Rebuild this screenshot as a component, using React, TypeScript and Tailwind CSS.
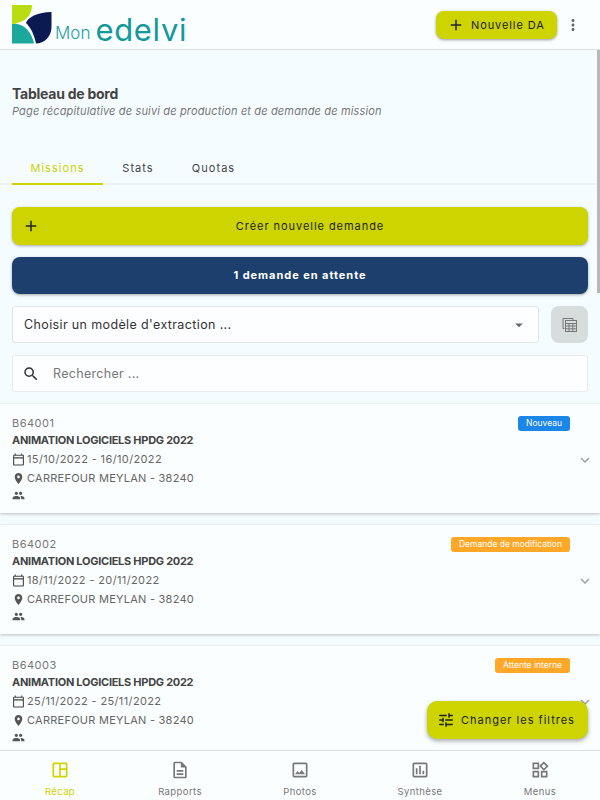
import React from "react";
import {
  MdAdd, MdMoreVert, MdOutlineCalendarToday, MdPlace, MdPeople, MdExpandMore, MdSearch, MdArrowDropDown,
  MdOutlineDescription, MdOutlinePhoto, MdOutlineAssessment, MdOutlineWidgets, MdTune, MdOutlineSpaceDashboard,
} from "react-icons/md";

function Logo() {
  return (
    <div className="flex items-end h-[49px] pl-3 pb-[6px]">
      <svg width="40" height="39" viewBox="0 0 40 39" className="mb-[-1px]">
        <path d="M0 0H20C20 9 15 15 8 17C5 18 3 19 0 20Z" fill="#b9dc12" />
        <path d="M0 19H5C13 20 20 28 22 38.500H0Z" fill="#1ba79c" />
        <path d="M39.500 7V22C39.500 32 32 38.500 24 38.500C22 28 18 22 14 18C16 12 26 7 39.500 7Z" fill="#0b1a52" />
      </svg>
      <span className="ml-[3px] text-[17px] leading-[20px] text-[#1c9e9c] font-light">Mon</span>
      <span className="ml-[5px] mb-[-2px] text-[31px] leading-[30px] text-[#12999a] tracking-[0.7px]">edelvi</span>
    </div>
  );
}

function Card({ code, dates, tag, tagColor }: { code: string; dates: string; tag: string; tagColor: string }) {
  return (
    <div className="relative h-[109px] bg-[#fbfeff] shadow-[0_1px_3px_rgba(0,0,0,0.25)] px-3 pt-[12px] shrink-0">
      <div className="text-[11px] leading-[14px] text-[#777] tracking-[0.5px]">{code}</div>
      <div className="mt-[3px] text-[11px] leading-[14px] font-bold text-[#444] tracking-[-0.27px]">ANIMATION LOGICIELS HPDG 2022</div>
      <div className="mt-[5px] flex items-center h-[14px] text-[11px] text-[#666] tracking-[0.37px]">
        <MdOutlineCalendarToday className="text-[13px] text-[#444] mr-[2px]" />{dates}
      </div>
      <div className="mt-[5px] flex items-center h-[14px] text-[11px] text-[#666] tracking-[0.25px]">
        <MdPlace className="text-[13px] text-[#555] mr-[2px]" />CARREFOUR MEYLAN - 38240
      </div>
      <div className="mt-[3px] h-[14px] flex items-center"><MdPeople className="text-[13px] text-[#555]" /></div>
      <span className={`absolute right-[30px] top-[12px] h-[15px] px-2 rounded-[3px] text-[8.5px] leading-[15px] text-white ${tagColor}`}>{tag}</span>
      <MdExpandMore className="absolute right-[6px] top-[47px] text-[18px] text-[#9aa0a3]" />
    </div>
  );
}

function NavItem({ icon, label, active }: { icon: React.ReactNode; label: string; active?: boolean }) {
  return (
    <div className={`flex-1 flex flex-col items-center pt-[9px] ${active ? "text-[#cdd400]" : "text-[#777]"}`}>
      <div className="text-[20px] h-[20px] flex items-center justify-center">{icon}</div>
      <span className="mt-[6px] text-[9.5px] leading-[12px] tracking-[0.4px]">{label}</span>
    </div>
  );
}

export default function App() {
  return (
    <div className="relative w-[600px] h-[800px] flex flex-col overflow-hidden bg-[#f5fcff] font-['Inter',sans-serif]">
      <header className="h-[50px] shrink-0 bg-[#fbfeff] border-b border-[#dcdfe0] flex items-start justify-between">
        <Logo />
        <div className="flex items-center pt-[11px] pr-[18px]">
          <button className="h-[28px] w-[121px] rounded-[8px] bg-[#cdd400] shadow-[0_1px_3px_rgba(0,0,0,0.4)] flex items-center pl-[11px] text-[11px] text-[#222] tracking-[0.9px]">
            <MdAdd className="text-[18px] mr-[6px]" />Nouvelle DA
          </button>
          <MdMoreVert className="ml-[7px] text-[18px] text-[#666]" />
        </div>
      </header>

      <main className="flex-1 min-h-0 overflow-hidden">
        <div className="px-3 pt-[35px]">
          <h1 className="text-[14px] leading-[18px] font-bold text-[#444] tracking-[-0.25px]">Tableau de bord</h1>
          <p className="mt-[1px] text-[11px] leading-[15px] italic text-[#777] tracking-[0.15px]">Page récapitulative de suivi de production et de demande de mission</p>
        </div>

        <div className="mt-[33px] h-[33px] border-b-2 border-[#edf1f2] flex px-3 text-[11px] tracking-[1.05px] text-[#444]">
          <div className="w-[91px] h-[33px] border-b-2 border-[#cdd400] text-center text-[#cdd400] leading-[33px]">Missions</div>
          <div className="w-[70px] text-center leading-[33px]">Stats</div>
          <div className="w-[79px] text-center leading-[33px] ml-[1px]">Quotas</div>
        </div>

        <div className="px-3 pt-[22px] flex flex-col gap-3">
          <button className="relative h-[38px] rounded-[8px] bg-[#cdd400] shadow-[0_1px_3px_rgba(0,0,0,0.35)] flex items-center justify-center pl-[20px] text-[11px] text-[#222] tracking-[0.95px]">
            <MdAdd className="absolute left-[10px] text-[18px] text-[#222]" />Créer nouvelle demande
          </button>
          <button className="h-[37px] rounded-[8px] bg-[#1d3f6d] shadow-[0_1px_3px_rgba(0,0,0,0.35)] text-[11px] font-bold text-white tracking-[0.95px]">1 demande en attente</button>
          <div className="flex gap-3">
            <div className="flex-1 h-[37px] rounded-[3px] bg-[#fcfeff] border border-[#e3e6e7] flex items-center justify-between pl-[11px] pr-[10px] text-[12.5px] text-[#333] tracking-[0.37px]">
              <span className="pt-[1px]">Choisir un modèle d'extraction ...</span>
              <MdArrowDropDown className="text-[18px] text-[#666]" />
            </div>
            <div className="w-[37px] h-[37px] rounded-[8px] bg-[#d7dcdd] flex items-center justify-center">
              <svg width="16" height="16" viewBox="0 0 16 16" fill="none" stroke="#777" strokeWidth="1">
                <path d="M2.5 11.500H1V1.500H11V3" />
                <rect x="3.500" y="3.500" width="11" height="11" />
                <path d="M3.500 6.500H14.500M3.500 9H14.500M3.500 11.800H14.500M7 6.500V14.500M10.800 6.500V14.500" />
              </svg>
            </div>
          </div>
          <div className="h-[37px] rounded-[3px] bg-[#fcfeff] border border-[#e8ebec] flex items-center pl-[9px] text-[12.5px] text-[#777] tracking-[0.3px]">
            <MdSearch className="text-[18px] text-[#333] mr-[13px]" />
            <span className="pt-[1px]">Rechercher ...</span>
          </div>
        </div>

        <div className="mt-3 flex flex-col gap-3">
          <Card code="B64001" dates="15/10/2022 - 16/10/2022" tag="Nouveau" tagColor="bg-[#1a86e8]" />
          <Card code="B64002" dates="18/11/2022 - 20/11/2022" tag="Demande de modification" tagColor="bg-[#ffa726]" />
          <Card code="B64003" dates="25/11/2022 - 25/11/2022" tag="Attente interne" tagColor="bg-[#ffa726]" />
        </div>
      </main>

      <nav className="h-[50px] shrink-0 bg-[#fbfeff] border-t border-[#dcdfe0] flex">
        <NavItem active icon={<MdOutlineSpaceDashboard />} label="Récap" />
        <NavItem icon={<MdOutlineDescription />} label="Rapports" />
        <NavItem icon={<MdOutlinePhoto />} label="Photos" />
        <NavItem icon={<MdOutlineAssessment />} label="Synthèse" />
        <NavItem icon={<MdOutlineWidgets />} label="Menus" />
      </nav>

      <button className="absolute right-[12px] top-[701px] w-[161px] h-[38px] rounded-[10px] bg-[#cdd400] shadow-[0_2px_4px_rgba(0,0,0,0.35)] flex items-center pl-[10px] text-[11px] text-[#222] tracking-[1px]">
        <MdTune className="text-[18px] mr-[6px]" />Changer les filtres
      </button>
      <div className="absolute right-0 top-[50px] w-[3px] h-[243px] bg-[#b8b8b8]" />
    </div>
  );
}
